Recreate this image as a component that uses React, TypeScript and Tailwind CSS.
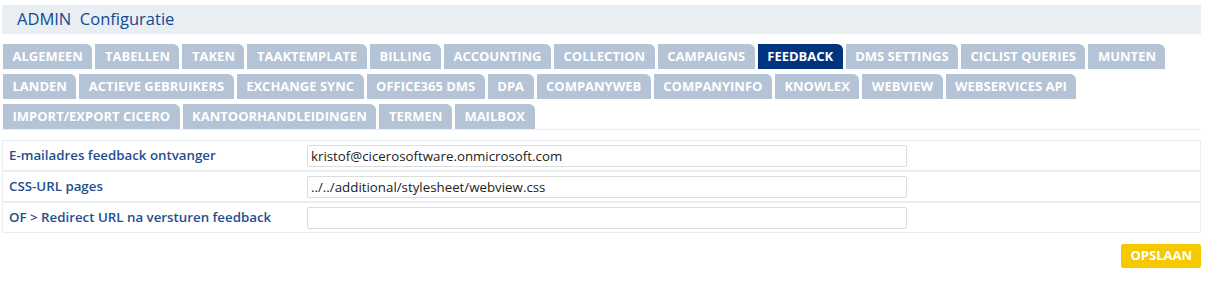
const rows: string[][] = [
  ["ALGEMEEN", "TABELLEN", "TAKEN", "TAAKTEMPLATE", "BILLING", "ACCOUNTING", "COLLECTION", "CAMPAIGNS", "FEEDBACK", "DMS SETTINGS", "CICLIST QUERIES", "MUNTEN"],
  ["LANDEN", "ACTIEVE GEBRUIKERS", "EXCHANGE SYNC", "OFFICE365 DMS", "DPA", "COMPANYWEB", "COMPANYINFO", "KNOWLEX", "WEBVIEW", "WEBSERVICES API"],
  ["IMPORT/EXPORT CICERO", "KANTOORHANDLEIDINGEN", "TERMEN", "MAILBOX"],
];

const fields = [
  { label: "E-mailadres feedback ontvanger", value: "kristof@cicerosoftware.onmicrosoft.com" },
  { label: "CSS-URL pages", value: "../../additional/stylesheet/webview.css" },
  { label: "OF > Redirect URL na versturen feedback", value: "" },
];

export default function App() {
  return (
    <div className="w-[1199px] ml-[2px] pt-[5px] bg-white" style={{ fontFamily: "'Open Sans', sans-serif" }}>
      {/* header */}
      <div className="h-[29px] bg-[#e9eef3] flex items-center pl-[15px] text-[16.5px] text-[#0f4a94]">
        ADMIN&nbsp;&nbsp;Configuratie
      </div>

      {/* tabs */}
      <div className="mt-[10px] pl-px flex flex-col gap-[5px] border-b border-[#e9eef3]">
        {rows.map((row, i) => (
          <div key={i} className="flex gap-[3px]">
            {row.map((t) => (
              <div
                key={t}
                className={
                  t === "FEEDBACK"
                    ? "h-[25px] px-[9.5px] flex items-center rounded-tr-[6px] bg-[#00347f] text-white text-[13px] font-bold"
                    : "h-[25px] px-[9.5px] flex items-center rounded-tr-[6px] bg-[#b4c3d5] text-white text-[13px] font-bold"
                }
              >
                {t}
              </div>
            ))}
          </div>
        ))}
      </div>

      {/* form */}
      <div className="mt-[10px] border border-[#e9eef3]">
        {fields.map((f, i) => (
          <div key={f.label} className={i > 0 ? "flex h-[31px] items-center border-t-2 border-[#e9eef3]" : "flex h-[29px] items-center"}>
            <div className="w-[304px] pl-[6px] text-[13.3px] font-semibold text-[#1f4f8e]">{f.label}</div>
            <input
              readOnly
              value={f.value}
              className="w-[600px] h-[22px] border border-[#dcdcdc] rounded-[2px] px-[3px] text-[13.3px] text-[#222] outline-none"
              style={{ fontFamily: "'Open Sans', sans-serif" }}
            />
          </div>
        ))}
      </div>

      <div className="flex justify-end mt-[11px]">
        <button className="h-[24px] px-[9px] bg-[#f5c800] rounded-[2px] text-white text-[13px] font-bold">OPSLAAN</button>
      </div>
    </div>
  );
}
